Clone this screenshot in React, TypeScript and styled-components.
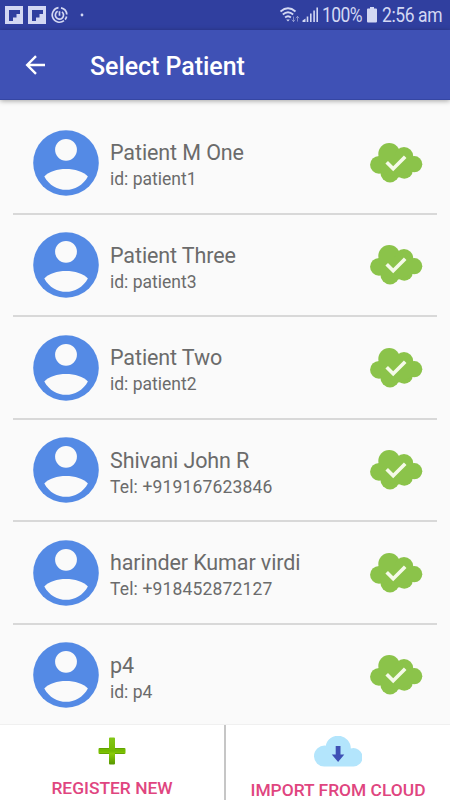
import React from 'react';
import styled, { createGlobalStyle } from 'styled-components';

const GlobalStyle = createGlobalStyle`
  * { box-sizing: border-box; }
  html, body { margin: 0; padding: 0; }
  body { font-family: Roboto, sans-serif; background: #fafafa; overflow: hidden; }
`;

const Screen = styled.div`
  display: flex;
  flex-direction: column;
  width: 450px;
  height: 800px;
  overflow: hidden;
  background: #fafafa;
`;

const StatusBar = styled.header`
  display: flex;
  flex: none;
  align-items: center;
  justify-content: space-between;
  height: 30px;
  padding: 0 8px 0 5px;
  background: #303f9f;
  color: #d3d8f3;
`;

const StatusGroup = styled.div`
  display: flex;
  align-items: center;
`;

const StatusText = styled.span<{ $width: number; $spacing?: number }>`
  width: ${(p) => p.$width}px;
  font-size: 17.5px;
  line-height: 30px;
  letter-spacing: ${(p) => p.$spacing ?? 0}px;
  white-space: nowrap;
  transform: translateY(0.5px) scaleY(1.11);
`;

const AppBar = styled.div`
  display: flex;
  flex: none;
  align-items: center;
  height: 70px;
  padding-left: 25px;
  background: #3f51b5;
  border-bottom: 1px solid #3546a3;
  box-shadow: 0 1px 5px rgba(0, 0, 0, 0.35);
  z-index: 1;
`;

const Title = styled.h1`
  margin: 5px 0 0 45px;
  color: #fff;
  font-size: 25px;
  font-weight: 500;
  line-height: 30px;
  letter-spacing: -0.05px;
`;

const List = styled.ul`
  flex: 1;
  min-height: 0;
  margin: 0;
  padding: 12.3px 13px 0;
  overflow: hidden;
  list-style: none;
`;

const Row = styled.li`
  display: flex;
  align-items: center;
  height: 102.5px;
  padding: 0 14px 0 20px;
  border-bottom: 2.5px solid #d8d8d8;
`;

const Details = styled.div`
  flex: 1;
  padding: 5px 0 0 11px;
  color: #6b6b6b;
`;

const Name = styled.div`
  font-size: 21.5px;
  letter-spacing: -0.1px;
  line-height: 28px;
`;

const Contact = styled.div<{ $phone: boolean }>`
  font-size: 17.5px;
  letter-spacing: ${(p) => (p.$phone ? 0.16 : 0)}px;
  line-height: 24px;
`;

const Footer = styled.footer`
  display: flex;
  flex: none;
  height: 76px;
  background: #fff;
  border-top: 1px solid #f0f0f0;
`;

const Action = styled.button`
  display: flex;
  flex: 1;
  flex-direction: column;
  align-items: center;
  padding: 11px 0 0;
  border: 0;
  background: none;
  color: #e0457f;
  font: 500 17.4px/24px Roboto, sans-serif;
  white-space: nowrap;

  & + & { border-left: 2px solid #c6c6c6; }
`;

const ActionIcon = styled.span`
  display: flex;
  align-items: center;
  justify-content: center;
  height: 34px;
  margin-bottom: 10.5px;
`;

const FlipIcon = () => (
  <svg width="23" height="18" viewBox="0 0 23 18">
    <path d="M0 0h18v18H0z" fill="currentColor" />
    <path d="M4 4h11v4h-3.5v3.5H8V15H4z" fill="#303f9f" />
  </svg>
);

const SwirlIcon = () => (
  <svg width="17" height="18" viewBox="0.5 0 17 18" fill="none" stroke="currentColor" strokeWidth="1.7">
    <path d="M8 1.700A7.300 7.300 0 1 0 13.500 14.700" />
    <path d="M10.500 1.800A7.300 7.300 0 0 1 16.300 8.500M16.100 10.500A7.300 7.300 0 0 1 14.600 13.600" />
    <path d="M7.200 5.300A4.100 4.100 0 1 0 11.500 5.800M9 5.200v4.500" />
  </svg>
);

const DotIcon = () => (
  <svg width="24" height="18" viewBox="0 0 24 18">
    <circle cx="14" cy="9" r="1.400" fill="currentColor" />
  </svg>
);

const WifiIcon = () => (
  <svg width="22" height="18" viewBox="0 0 22 18" fill="none" stroke="currentColor">
    <path d="M.5 5.500Q8-.9 15.500 5.500M2.800 8.500Q8 3.900 13.200 8.500M5.100 11.500Q8 9 10.900 11.500" strokeWidth="1.800" />
    <path d="M6.200 13.500h3.600L8 15.600z" fill="currentColor" stroke="none" />
    <path d="M13.500 10.500v5m-1.700-1.800 1.700 2 1.600-2M17.500 15.500v-5m-1.700 1.800 1.700-2 1.700 2" strokeWidth="1" opacity=".5" />
  </svg>
);

const SignalIcon = () => (
  <svg width="20" height="18" viewBox="0 0 20 18" fill="currentColor">
    <path d="M.5 16v-1.500l3-2V16zM4.700 10.500h1.600V16H4.700zM8 7.500h1.600V16H8zM11.300 4.500h1.600V16h-1.600zM14.400 1.500H16V16h-1.600z" />
  </svg>
);

const BatteryIcon = () => (
  <svg width="15" height="18" viewBox="0 0 15 18" fill="currentColor">
    <path d="M3 1h4v1.500h2q1 0 1 1v12q0 1-1 1H1q-1 0-1-1v-12q0-1 1-1h2z" />
  </svg>
);

const BackIcon = () => (
  <svg width="20" height="20" viewBox="0 0 20 20" fill="none" stroke="#fff" strokeWidth="2.400">
    <path d="M20 10H2.200M11 1.200 2.200 10l8.800 8.800" />
  </svg>
);

const Avatar = () => (
  <svg width="66" height="66" viewBox="0 0 66 66">
    <circle cx="33" cy="33" r="32.800" fill="#548ae5" />
    <circle cx="33" cy="19.800" r="10.900" fill="#fafafa" />
    <path d="M11.300 46.500C20 36.500 46 36.500 54.900 46.500C45 64.300 21 64.300 11.300 46.500Z" fill="#fafafa" />
  </svg>
);

const SyncedCloud = () => (
  <svg width="53" height="40" viewBox="0 0 53 40">
    <g fill="#8bc34a">
      <circle cx="19.200" cy="11" r="10.900" />
      <circle cx="34" cy="13.200" r="9.200" />
      <circle cx="44.200" cy="21.200" r="8.100" />
      <circle cx="9" cy="21.800" r="8.900" />
      <circle cx="20" cy="29.800" r="9.600" />
      <circle cx="34.300" cy="27.200" r="8.500" />
      <path d="M9 13h34v15.500L29 34.500 11.500 30.500z" />
    </g>
    <path d="m16.700 19.200 6.500 6.600L35.200 13.700" fill="none" stroke="#f5fae8" strokeWidth="3.600" />
  </svg>
);

const PlusIcon = () => (
  <svg width="28" height="28" viewBox="0 0 28 28">
    <defs>
      <linearGradient id="plusFill" x1="0" y1="0" x2="0" y2="1">
        <stop offset="0" stopColor="#83c717" />
        <stop offset=".35" stopColor="#78bd08" />
        <stop offset=".5" stopColor="#73b900" />
        <stop offset=".6" stopColor="#8acb08" />
        <stop offset="1" stopColor="#569600" />
      </linearGradient>
    </defs>
    <path d="M12 .5h4q1 0 1 1V11h9.500q1 0 1 1v4q0 1-1 1H17v9.500q0 1-1 1h-4q-1 0-1-1V17H1.500q-1 0-1-1v-4q0-1 1-1H11V1.500q0-1 1-1z" fill="url(#plusFill)" />
    <path d="M1.500 11.600H11M17 11.600h9.500M1.500 16.500H11M17 16.500h9.500" stroke="#599800" strokeWidth="1" opacity=".75" />
  </svg>
);

const ImportIcon = () => (
  <svg width="48" height="31" viewBox="0 0 48 31">
    <path d="M11 30.500A10.300 10.300 0 0 1 0 20A10.500 10.500 0 0 1 11.700 9.700A12.700 12.700 0 0 1 36.800 12.500A9.200 9.200 0 1 1 38.500 30.500Z" fill="#b3e5fc" />
    <path d="M21.700 10h4.800v8.500h3.800L24.100 26l-6.300-7.500h3.900z" fill="#3f51b5" />
  </svg>
);

const patients = [
  { name: 'Patient M One', contact: 'id: patient1' },
  { name: 'Patient Three', contact: 'id: patient3' },
  { name: 'Patient Two', contact: 'id: patient2' },
  { name: 'Shivani John R', contact: 'Tel: +919167623846' },
  { name: 'harinder Kumar virdi', contact: 'Tel: +918452872127' },
  { name: 'p4', contact: 'id: p4' },
];

export default function App() {
  return (
    <>
      <GlobalStyle />
      <Screen>
        <StatusBar>
          <StatusGroup>
            <FlipIcon />
            <FlipIcon />
            <SwirlIcon />
            <DotIcon />
          </StatusGroup>
          <StatusGroup>
            <WifiIcon />
            <SignalIcon />
            <StatusText $width={45} $spacing={-0.6}>100%</StatusText>
            <BatteryIcon />
            <StatusText $width={60} $spacing={-0.4}>2:56 am</StatusText>
          </StatusGroup>
        </StatusBar>
        <AppBar>
          <BackIcon />
          <Title>Select Patient</Title>
        </AppBar>
        <List>
          {patients.map((p) => (
            <Row key={p.name}>
              <Avatar />
              <Details>
                <Name>{p.name}</Name>
                <Contact $phone={p.contact.startsWith('Tel')}>{p.contact}</Contact>
              </Details>
              <SyncedCloud />
            </Row>
          ))}
        </List>
        <Footer>
          <Action>
            <ActionIcon><PlusIcon /></ActionIcon>
            REGISTER NEW
          </Action>
          <Action>
            <ActionIcon><ImportIcon /></ActionIcon>
            IMPORT FROM CLOUD
          </Action>
        </Footer>
      </Screen>
    </>
  );
}
